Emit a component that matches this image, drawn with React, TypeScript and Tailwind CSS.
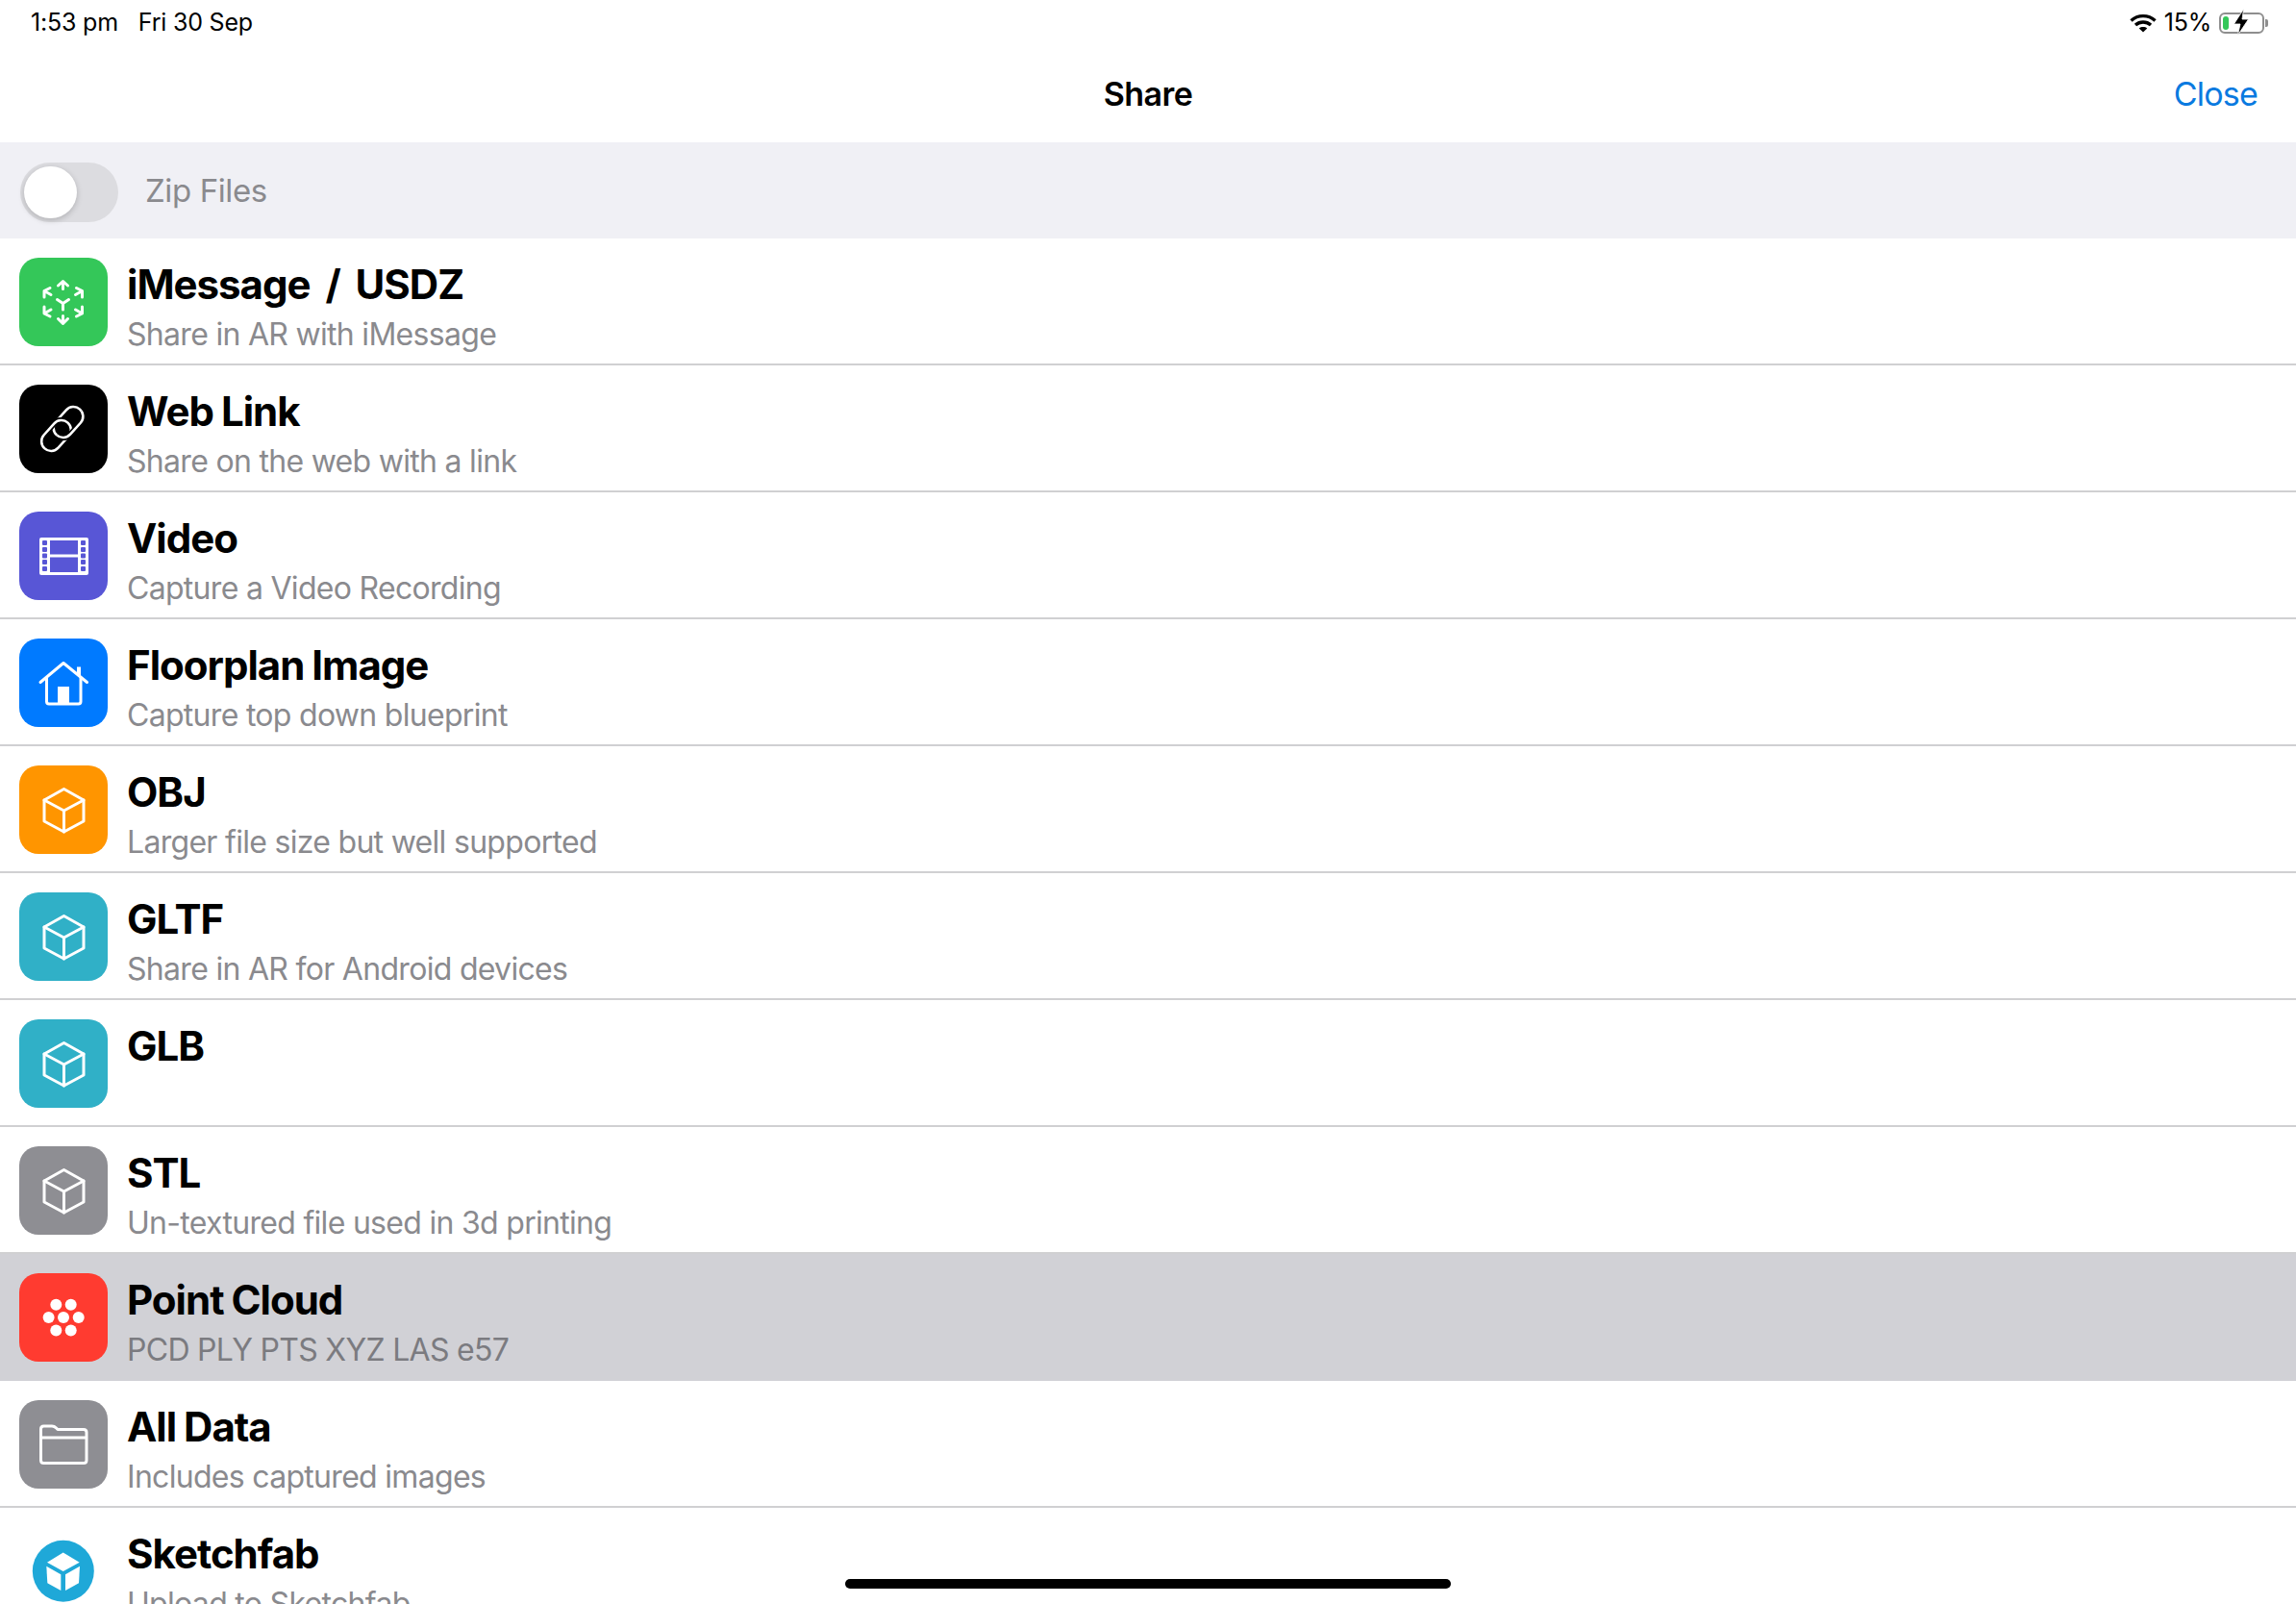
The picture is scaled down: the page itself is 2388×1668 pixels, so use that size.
const font = "[font-family:Inter,'Liberation_Sans',sans-serif]";

function CubeIcon() {
  return (
    <svg viewBox="0 0 92 92" className="w-full h-full" fill="none" stroke="white" strokeWidth="3" strokeLinejoin="round" strokeLinecap="round">
      <path d="M46.5 24.5L67 36V58L46.5 69L26 58V36Z" />
      <path d="M26 36L46.5 47L67 36M46.5 47V69" />
    </svg>
  );
}

function ArIcon() {
  return (
    <svg viewBox="0 0 92 92" className="w-full h-full" fill="none" stroke="white" strokeWidth="3" strokeLinejoin="round" strokeLinecap="round">
      <path d="M45.5 25V32.5M40.5 29L45.5 24.5L50.5 29" />
      <path d="M45.5 60.5V68M40.5 63.5L45.5 68.5L50.5 63.5" />
      <path d="M45.5 54V47.5M39.5 43.5L45.5 47.5L51.5 43.5" />
      <path d="M26 34.5L33 38.5M32 31.5L26 34.5V41" />
      <path d="M65.5 34.5L58.5 38.5M59.5 31.5L65.5 34.5V41" />
      <path d="M26 58L33 54M26 51V58L32 61" />
      <path d="M65.5 58L58.5 54M65.5 51V58L59.5 61" />
    </svg>
  );
}

function LinkIcon() {
  const upper = <rect x="33" y="29" width="36" height="20" rx="10" transform="rotate(-48 51 39)" />;
  const lower = <rect x="20.5" y="43" width="36" height="20" rx="10" transform="rotate(-48 38.5 53)" />;
  return (
    <svg viewBox="0 0 92 92" className="w-full h-full" fill="none" strokeWidth="2.6">
      <defs>
        <clipPath id="link-lower-half">
          <path d="M92 0V92H0Z" />
        </clipPath>
      </defs>
      <g stroke="white">{upper}</g>
      <g stroke="black" strokeWidth="6">{lower}</g>
      <g stroke="white">{lower}</g>
      <g clipPath="url(#link-lower-half)">
        <g stroke="black" strokeWidth="6">{upper}</g>
        <g stroke="white">{upper}</g>
      </g>
    </svg>
  );
}

function FilmIcon() {
  return (
    <svg viewBox="0 0 92 92" className="w-full h-full">
      <rect x="21" y="27" width="51" height="39" rx="2" fill="white" />
      <rect x="32" y="30" width="29" height="14.5" fill="#5856d6" />
      <rect x="32" y="47.5" width="29" height="15.5" fill="#5856d6" />
      {[30, 37, 43.5, 50, 57].map((y) => (
        <g key={y} fill="#5856d6">
          <rect x="24" y={y} width="5" height="5" rx="1" />
          <rect x="64" y={y} width="5" height="5" rx="1" />
        </g>
      ))}
    </svg>
  );
}

function HouseIcon() {
  return (
    <svg viewBox="0 0 92 92" className="w-full h-full" fill="none" stroke="white" strokeWidth="3" strokeLinecap="round" strokeLinejoin="round">
      <path d="M22 45.5L46 25.5L70.5 45.5" />
      <path d="M28.5 41V65.5C28.5 67 29.5 68 31 68H61.5C63 68 64 67 64 65.5V41" />
      <path d="M62 29.5V39" strokeWidth="4" strokeLinecap="butt" />
      <rect x="40" y="50" width="12" height="18" fill="white" stroke="none" />
    </svg>
  );
}

function DotsIcon() {
  const dots = [
    [38.3, 32.7],
    [53.7, 32.7],
    [30.6, 46],
    [46, 46],
    [61.7, 46],
    [38.3, 59.5],
    [53.7, 59.5],
  ];
  return (
    <svg viewBox="0 0 92 92" className="w-full h-full" fill="white">
      {dots.map(([x, y]) => (
        <circle key={`${x}-${y}`} cx={x} cy={y} r="6" />
      ))}
    </svg>
  );
}

function FolderIcon() {
  return (
    <svg viewBox="0 0 92 92" className="w-full h-full" fill="none" stroke="white" strokeWidth="3" strokeLinejoin="round">
      <path d="M22.5 30C22.5 28 23.5 27 25.5 27H34C36 27 37 27.5 38.5 29L40 30.5H67C69 30.5 70 31.5 70 33.5V62.5C70 64.5 69 65.5 67 65.5H25.5C23.5 65.5 22.5 64.5 22.5 62.5Z" />
      <path d="M22.5 39H70" />
    </svg>
  );
}

function SketchfabLogo() {
  return (
    <svg viewBox="0 0 92 92" className="w-full h-full">
      <circle cx="45.8" cy="45.8" r="32" fill="#1fa8d8" />
      <path d="M45.7 26.5L62.7 36.7L45.7 46L29 36.7Z" fill="white" />
      <path d="M28.3 40.7L43.3 49.3V66L29.3 58.3Z" fill="white" />
      <path d="M63 40.7L48 49.3V66L62 58.3Z" fill="white" />
    </svg>
  );
}

type Row = {
  title: string;
  sub?: string;
  color: string;
  icon: React.ReactNode;
  active?: boolean;
};

const rows: Row[] = [
  { title: "iMessage  /  USDZ", sub: "Share in AR with iMessage", color: "bg-[#34c759]", icon: <ArIcon /> },
  { title: "Web Link", sub: "Share on the web with a link", color: "bg-black", icon: <LinkIcon /> },
  { title: "Video", sub: "Capture a Video Recording", color: "bg-[#5856d6]", icon: <FilmIcon /> },
  { title: "Floorplan Image", sub: "Capture top down blueprint", color: "bg-[#007aff]", icon: <HouseIcon /> },
  { title: "OBJ", sub: "Larger file size but well supported", color: "bg-[#ff9500]", icon: <CubeIcon /> },
  { title: "GLTF", sub: "Share in AR for Android devices", color: "bg-[#30b0c7]", icon: <CubeIcon /> },
  { title: "GLB", color: "bg-[#30b0c7]", icon: <CubeIcon /> },
  { title: "STL", sub: "Un-textured file used in 3d printing", color: "bg-[#8e8e93]", icon: <CubeIcon /> },
  { title: "Point Cloud", sub: "PCD PLY PTS XYZ LAS e57", color: "bg-[#ff3b30]", icon: <DotsIcon />, active: true },
  { title: "All Data", sub: "Includes captured images", color: "bg-[#8e8e93]", icon: <FolderIcon /> },
  { title: "Sketchfab", sub: "Upload to Sketchfab", color: "", icon: <SketchfabLogo /> },
];

export default function App() {
  return (
    <div className={`relative w-[2388px] h-[1668px] overflow-hidden bg-white ${font}`}>
      <div className="h-[46px] pt-[2px] pl-[32px] pr-[29px] flex items-center justify-between text-[25px] tracking-[-0.2px] text-black">
        <div className="flex gap-[21px]">
          <span>1:53 pm</span>
          <span>Fri 30 Sep</span>
        </div>
        <div className="flex items-center gap-[8px]">
          <svg viewBox="0 0 28 20" className="w-[28px] h-[20px]" fill="none" stroke="black" strokeWidth="3.4">
            <path d="M1.5 7.5C8.5 1 19.5 1 26.5 7.5" />
            <path d="M6 12C10.5 8 17.5 8 22 12" />
            <path d="M14 19.5L9.8 15.5C12 13.6 16 13.6 18.2 15.5Z" fill="black" stroke="none" />
          </svg>
          <span>15%</span>
          <div className="flex items-center gap-[1px]">
            <div className="relative w-[47px] h-[22px] rounded-[6px] border-2 border-[#8e8e8e] p-[2px]">
              <div className="w-[6px] h-full rounded-[3px] bg-[#34c759]" />
              <svg viewBox="0 0 18 28" className="absolute left-[11px] top-[-6px] w-[20px] h-[28px]">
                <path d="M11.5 0.5L1.5 16H8L5.5 27.5L16.5 11H10Z" fill="black" stroke="white" strokeWidth="0.8" />
              </svg>
            </div>
            <div className="w-[3px] h-[8px] rounded-r-[2px] bg-[#8e8e8e]" />
          </div>
        </div>
      </div>

      <div className="relative h-[102px] flex items-center justify-center">
        <span className="text-[34px] font-semibold tracking-[-0.6px] text-black">Share</span>
        <span className="absolute right-[40px] text-[34px] tracking-[-0.8px] text-[#0a7ae0]">Close</span>
      </div>

      <div className="h-[100px] bg-[#f0f0f5] flex items-center pl-[21px] gap-[28px]">
        <div className="w-[102px] h-[62px] mt-[4px] rounded-full bg-[#dcdce0] p-[4px]">
          <div className="w-[55px] h-[54px] rounded-full bg-white shadow-[0_2px_6px_rgba(0,0,0,0.2)]" />
        </div>
        <span className="mt-[2px] text-[33px] tracking-[-0.4px] text-[#8a8a8e]">Zip Files</span>
      </div>

      {rows.map((r) => (
        <div
          key={r.title}
          className={`h-[132px] pl-[20px] flex gap-[20px] ${r.active ? "bg-[#d1d1d6]" : "border-b-2 border-[#d0d0d2]"}`}
        >
          <div className={`w-[92px] h-[92px] mt-[20px] rounded-[20px] shrink-0 overflow-hidden ${r.color}`}>{r.icon}</div>
          <div className="pt-[22px] flex flex-col">
            <span className="h-[52px] leading-[52px] text-[42px] font-bold tracking-[-1px] [word-spacing:-1px] whitespace-pre text-black">{r.title}</span>
            {r.sub && (
              <span className={`mt-[5px] h-[42px] leading-[42px] text-[32px] tracking-[-0.7px] ${r.active ? "text-[#7b7b80]" : "text-[#8a8a8e]"}`}>
                {r.sub}
              </span>
            )}
          </div>
        </div>
      ))}

      <div className="absolute left-[879px] top-[1642px] w-[630px] h-[10px] rounded-full bg-black" />
    </div>
  );
}
